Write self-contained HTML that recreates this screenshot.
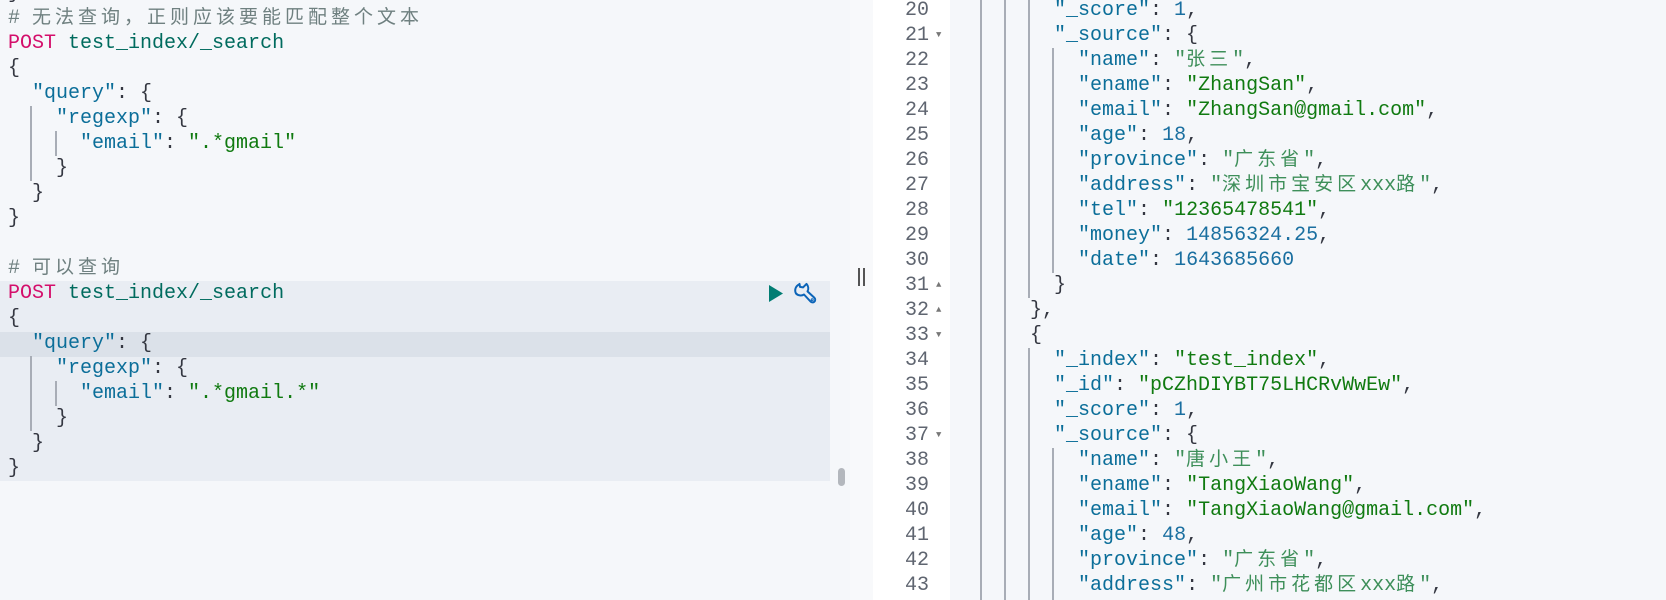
<!DOCTYPE html>
<html><head><meta charset="utf-8"><style>
*{margin:0;padding:0;box-sizing:border-box}
body{width:1666px;height:600px;overflow:hidden;background:#f5f7fa;position:relative;font-family:"Liberation Mono","Noto Sans CJK SC",monospace;font-size:20px;color:#343741}
.l{display:block;white-space:pre;line-height:25px;height:25px}
.c{font-family:"Noto Sans CJK SC",sans-serif;letter-spacing:4px;font-size:19px;line-height:0}
.k{color:#0b6e99}.s{color:#107a10}.n{color:#1a6fa0}.m{color:#d40e6b}.u{color:#006b5e}.cm{color:#6f8080}
.sc{color:#3e8f5a}
.g{position:absolute;width:2px;background:#a8adb6}
.num{position:absolute;width:60px;text-align:right;color:#5f6570;line-height:25px;left:869px}
.ar{position:absolute;left:936px;font-size:9px;color:#777;line-height:25px}
</style></head><body>
<div style="position:absolute;left:0;top:281px;width:830px;height:200px;background:#e9edf3"></div>
<div style="position:absolute;left:0;top:332px;width:830px;height:25px;background:#dbe1e9"></div>
<div style="position:absolute;left:838px;top:468px;width:7px;height:18px;border-radius:4px;background:#b3b7bd"></div>
<div class="g" style="left:30px;top:106px;height:75px"></div>
<div class="g" style="left:55px;top:131px;height:25px"></div>
<div class="g" style="left:30px;top:356px;height:75px"></div>
<div class="g" style="left:55px;top:381px;height:25px"></div>
<div style="position:absolute;left:8px;top:-19px">
<div class="l">}</div>
<div class="l cm"># <span class="c">无法查询，正则应该要能匹配整个文本</span></div>
<div class="l"><span class="m">POST</span> <span class="u">test_index/_search</span></div>
<div class="l">{</div>
<div class="l">  <span class="k">"query"</span>: {</div>
<div class="l">    <span class="k">"regexp"</span>: {</div>
<div class="l">      <span class="k">"email"</span>: <span class="s">".*gmail"</span></div>
<div class="l">    }</div>
<div class="l">  }</div>
<div class="l">}</div>
<div class="l"> </div>
<div class="l cm"># <span class="c">可以查询</span></div>
<div class="l"><span class="m">POST</span> <span class="u">test_index/_search</span></div>
<div class="l">{</div>
<div class="l">  <span class="k">"query"</span>: {</div>
<div class="l">    <span class="k">"regexp"</span>: {</div>
<div class="l">      <span class="k">"email"</span>: <span class="s">".*gmail.*"</span></div>
<div class="l">    }</div>
<div class="l">  }</div>
<div class="l">}</div>
</div>
<svg style="position:absolute;left:766px;top:282px" width="56" height="26" viewBox="0 0 56 26">
<path d="M3 3 L17 11.5 L3 20 Z" fill="#017d73"/>
<g fill="none" stroke="#0b64b8" stroke-width="2" stroke-linecap="round" stroke-linejoin="round">
<path d="M33 2.5 a6.5 6.5 0 0 0 -3 9 a6.5 6.5 0 0 0 8 1 l6.5 7 a2.6 2.6 0 0 0 4 -3.6 l-7 -6.5 a6.5 6.5 0 0 0 -1 -7.5 l-3.5 3.5 -3 -0.5 -0.5 -3 z"/>
<circle cx="46.2" cy="17.8" r="0.5"/>
</g></svg>
<div style="position:absolute;left:850px;top:0;width:23px;height:600px;background:#f8f9fb"></div>
<div style="position:absolute;left:858px;top:268px;width:2px;height:18px;background:#555"></div>
<div style="position:absolute;left:863px;top:268px;width:2px;height:18px;background:#555"></div>
<div style="position:absolute;left:873px;top:0;width:77px;height:600px;background:#fff"></div>
<div class="g" style="left:980px;top:0;height:600px"></div>
<div class="g" style="left:1004px;top:0;height:600px"></div>
<div class="g" style="left:1028px;top:0;height:298px"></div>
<div class="g" style="left:1028px;top:348px;height:252px"></div>
<div class="g" style="left:1052px;top:48px;height:225px"></div>
<div class="g" style="left:1052px;top:448px;height:152px"></div>
<div style="position:absolute;left:0;top:-2px">
<div class="num" style="top:0">20</div><div class="num" style="top:25px">21</div><div class="num" style="top:50px">22</div><div class="num" style="top:75px">23</div><div class="num" style="top:100px">24</div><div class="num" style="top:125px">25</div><div class="num" style="top:150px">26</div><div class="num" style="top:175px">27</div><div class="num" style="top:200px">28</div><div class="num" style="top:225px">29</div><div class="num" style="top:250px">30</div><div class="num" style="top:275px">31</div><div class="num" style="top:300px">32</div><div class="num" style="top:325px">33</div><div class="num" style="top:350px">34</div><div class="num" style="top:375px">35</div><div class="num" style="top:400px">36</div><div class="num" style="top:425px">37</div><div class="num" style="top:450px">38</div><div class="num" style="top:475px">39</div><div class="num" style="top:500px">40</div><div class="num" style="top:525px">41</div><div class="num" style="top:550px">42</div><div class="num" style="top:575px">43</div>
<div class="ar" style="top:25px">▼</div><div class="ar" style="top:275px">▲</div><div class="ar" style="top:300px">▲</div><div class="ar" style="top:325px">▼</div><div class="ar" style="top:425px">▼</div>
</div>
<div style="position:absolute;left:958px;top:-2px">
<div class="l">        <span class="k">"_score"</span>: <span class="n">1</span>,</div>
<div class="l">        <span class="k">"_source"</span>: {</div>
<div class="l">          <span class="k">"name"</span>: <span class="sc">"<span class="c">张三</span>"</span>,</div>
<div class="l">          <span class="k">"ename"</span>: <span class="s">"ZhangSan"</span>,</div>
<div class="l">          <span class="k">"email"</span>: <span class="s">"ZhangSan@gmail.com"</span>,</div>
<div class="l">          <span class="k">"age"</span>: <span class="n">18</span>,</div>
<div class="l">          <span class="k">"province"</span>: <span class="sc">"<span class="c">广东省</span>"</span>,</div>
<div class="l">          <span class="k">"address"</span>: <span class="sc">"<span class="c">深圳市宝安区</span>xxx<span class="c">路</span>"</span>,</div>
<div class="l">          <span class="k">"tel"</span>: <span class="s">"12365478541"</span>,</div>
<div class="l">          <span class="k">"money"</span>: <span class="n">14856324.25</span>,</div>
<div class="l">          <span class="k">"date"</span>: <span class="n">1643685660</span></div>
<div class="l">        }</div>
<div class="l">      },</div>
<div class="l">      {</div>
<div class="l">        <span class="k">"_index"</span>: <span class="s">"test_index"</span>,</div>
<div class="l">        <span class="k">"_id"</span>: <span class="s">"pCZhDIYBT75LHCRvWwEw"</span>,</div>
<div class="l">        <span class="k">"_score"</span>: <span class="n">1</span>,</div>
<div class="l">        <span class="k">"_source"</span>: {</div>
<div class="l">          <span class="k">"name"</span>: <span class="sc">"<span class="c">唐小王</span>"</span>,</div>
<div class="l">          <span class="k">"ename"</span>: <span class="s">"TangXiaoWang"</span>,</div>
<div class="l">          <span class="k">"email"</span>: <span class="s">"TangXiaoWang@gmail.com"</span>,</div>
<div class="l">          <span class="k">"age"</span>: <span class="n">48</span>,</div>
<div class="l">          <span class="k">"province"</span>: <span class="sc">"<span class="c">广东省</span>"</span>,</div>
<div class="l">          <span class="k">"address"</span>: <span class="sc">"<span class="c">广州市花都区</span>xxx<span class="c">路</span>"</span>,</div>
</div>
</body></html>
